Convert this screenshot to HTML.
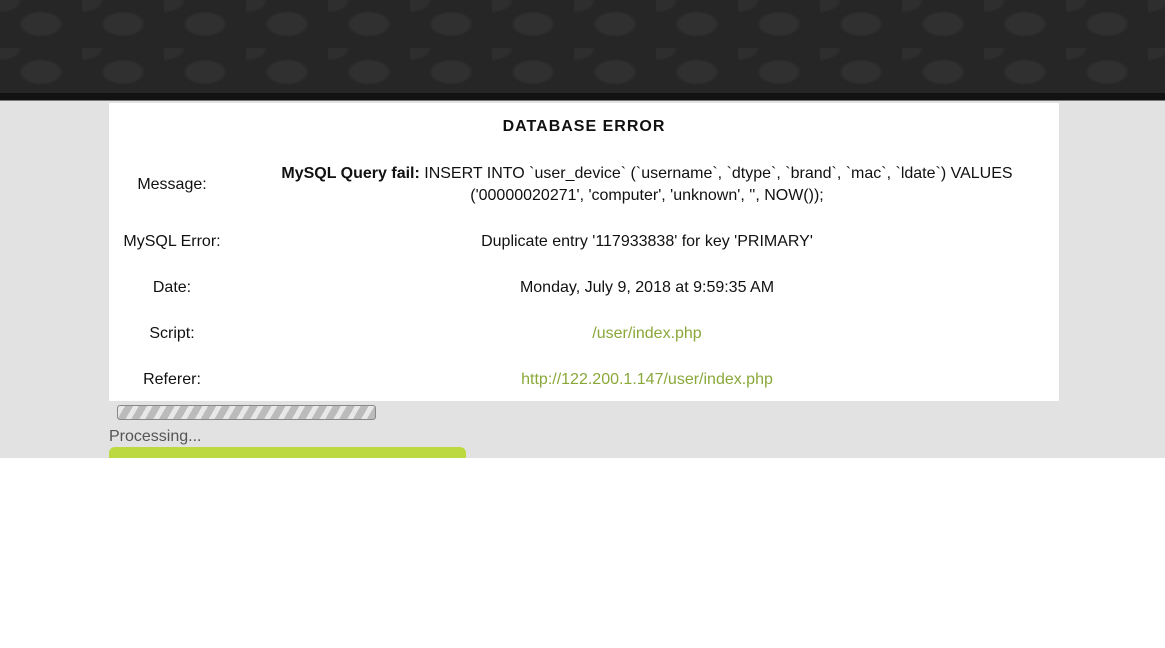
<!DOCTYPE html><html><head><style>
body{margin:0;width:1165px;height:648px;background:#fff;font-family:"Liberation Sans",sans-serif;position:relative;overflow:hidden}
.hdr{position:absolute;left:0;top:0;width:1165px;height:93px;background:#262626;background-image:radial-gradient(ellipse at 50% 50%,#303030 0 18px,transparent 22px),radial-gradient(ellipse at 0 0,#2e2e2e 0 18px,transparent 22px);background-size:82px 48px}
.band{position:absolute;left:0;top:93px;width:1165px;height:7px;background:#121212;border-bottom:1px solid #777}
.bg{position:absolute;left:0;top:101px;width:1165px;height:357px;background:#e2e2e2}
.panel{position:absolute;left:109px;top:103px;width:950px;height:298px;background:#fff;font-size:16px;color:#111}
.t{position:absolute;left:0;width:950px;text-align:center;top:15px;font-weight:bold;letter-spacing:1px;font-size:16px}
.l{position:absolute;left:0;width:126px;text-align:center}
.v{position:absolute;left:150px;width:776px;text-align:center;line-height:22px}
a{color:#8aa83a;text-decoration:none}
.prog{position:absolute;left:117px;top:405px;width:257px;height:13px;border:1px solid #888;border-radius:3px;background:repeating-linear-gradient(-60deg,#bbb 0 7px,#e8e8e8 7px 12px)}
.pt{position:absolute;left:109px;top:428px;font-size:16px;color:#555}
.gb{position:absolute;left:109px;top:447px;width:357px;height:11px;background:#bcda40;border-radius:6px 6px 0 0}
</style></head><body>
<div class="hdr"></div><div class="band"></div><div class="bg"></div>
<div class="panel">
<div class="t">DATABASE ERROR</div>
<div class="l" style="top:73px">Message:</div>
<div class="v" style="top:60px"><b>MySQL Query fail:</b> INSERT INTO `user_device` (`username`, `dtype`, `brand`, `mac`, `ldate`) VALUES ('00000020271', 'computer', 'unknown', '', NOW());</div>
<div class="l" style="top:130px">MySQL Error:</div>
<div class="v" style="top:128px">Duplicate entry '117933838' for key 'PRIMARY'</div>
<div class="l" style="top:176px">Date:</div>
<div class="v" style="top:174px">Monday, July 9, 2018 at 9:59:35 AM</div>
<div class="l" style="top:222px">Script:</div>
<div class="v" style="top:220px"><a>/user/index.php</a></div>
<div class="l" style="top:268px">Referer:</div>
<div class="v" style="top:266px"><a>http://122.200.1.147/user/index.php</a></div>
</div>
<div class="prog"></div>
<div class="pt">Processing...</div>
<div class="gb"></div>
</body></html>
